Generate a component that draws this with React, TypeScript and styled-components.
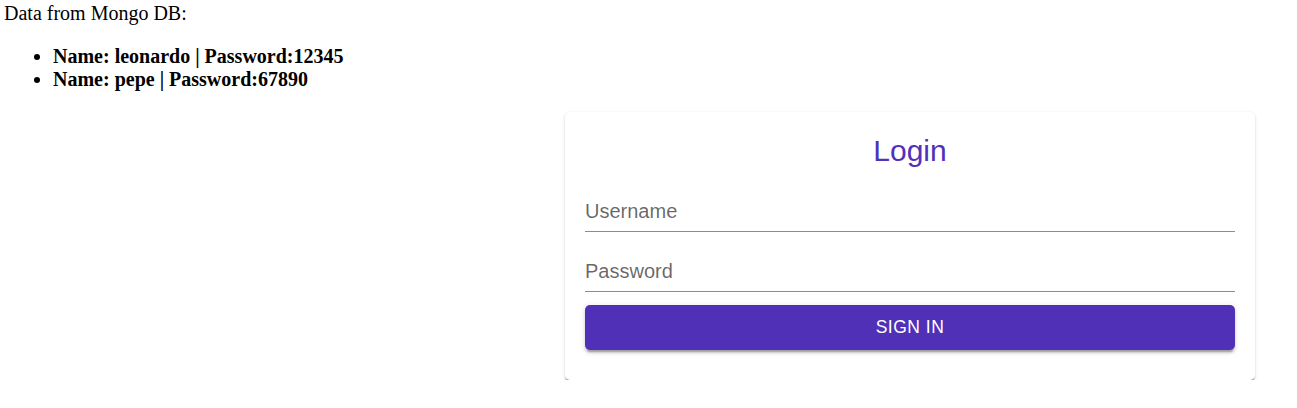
import React from "react";
import styled, { createGlobalStyle } from "styled-components";

const GlobalStyle = createGlobalStyle`
  html, body {
    margin: 0;
    padding: 0;
    background: #ffffff;
  }
  body {
    font-family: "Liberation Serif", "Times New Roman", serif;
    font-size: 20px;
    color: #000000;
  }
`;

const Page = styled.div`
  display: flex;
  flex-direction: column;
  padding: 2px 0 0 4px;
`;

const Heading = styled.div`
  font-family: "Liberation Serif", "Times New Roman", serif;
  font-size: 20px;
  line-height: 23px;
`;

const UserList = styled.ul`
  margin: 20px 0 20px 0;
  padding-left: 49px;
  list-style: disc;
`;

const UserItem = styled.li`
  font-family: "Liberation Serif", "Times New Roman", serif;
  font-size: 20px;
  line-height: 23px;
  font-weight: 700;
`;

const CardRow = styled.div`
  display: flex;
  justify-content: flex-end;
  padding-right: 42px;
  margin-top: 1px;
`;

const Card = styled.form`
  width: 690px;
  box-sizing: border-box;
  padding: 20px 20px 30px 20px;
  background: #ffffff;
  border-radius: 5px;
  box-shadow: 0px 2.5px 1.25px -1.25px rgba(0, 0, 0, 0.2),
    0px 1.25px 1.25px 0px rgba(0, 0, 0, 0.14),
    0px 1.25px 3.75px 0px rgba(0, 0, 0, 0.12);
  display: flex;
  flex-direction: column;
  font-family: "Liberation Sans", Arial, sans-serif;
`;

const Title = styled.h2`
  margin: -1px 0 0 0;
  font-family: "Liberation Sans", Arial, sans-serif;
  font-weight: 400;
  font-size: 30px;
  line-height: 40px;
  text-align: center;
  color: #5130ba;
`;

const Field = styled.label<{ $gap: number }>`
  display: flex;
  align-items: flex-end;
  height: 37px;
  box-sizing: border-box;
  padding-bottom: 8px;
  margin-top: ${(p) => p.$gap}px;
  border-bottom: 1px solid #8c8c8c;
`;

const FieldLabel = styled.span`
  font-family: "Liberation Sans", Arial, sans-serif;
  font-size: 20px;
  line-height: 24px;
  color: rgba(0, 0, 0, 0.6);
`;

const SubmitButton = styled.button`
  margin-top: 13px;
  height: 45px;
  width: 100%;
  border: none;
  border-radius: 5px;
  background: #5030b7;
  color: #ffffff;
  font-family: "Liberation Sans", Arial, sans-serif;
  font-weight: 400;
  font-size: 17.5px;
  letter-spacing: 0.5px;
  text-transform: uppercase;
  cursor: pointer;
  box-shadow: 0px 3.75px 1.25px -2.5px rgba(0, 0, 0, 0.2),
    0px 2.5px 2.5px 0px rgba(0, 0, 0, 0.14),
    0px 1.25px 6.25px 0px rgba(0, 0, 0, 0.12);
`;

const users = [
  { name: "leonardo", password: "12345" },
  { name: "pepe", password: "67890" },
];

export default function App() {
  return (
    <>
      <GlobalStyle />
      <Page>
        <Heading>Data from Mongo DB:</Heading>
        <UserList>
          {users.map((u) => (
            <UserItem key={u.name}>
              Name: {u.name} | Password:{u.password}
            </UserItem>
          ))}
        </UserList>
        <CardRow>
          <Card onSubmit={(e) => e.preventDefault()}>
            <Title>Login</Title>
            <Field $gap={24}>
              <FieldLabel>Username</FieldLabel>
            </Field>
            <Field $gap={23}>
              <FieldLabel>Password</FieldLabel>
            </Field>
            <SubmitButton type="submit">Sign in</SubmitButton>
          </Card>
        </CardRow>
      </Page>
    </>
  );
}
